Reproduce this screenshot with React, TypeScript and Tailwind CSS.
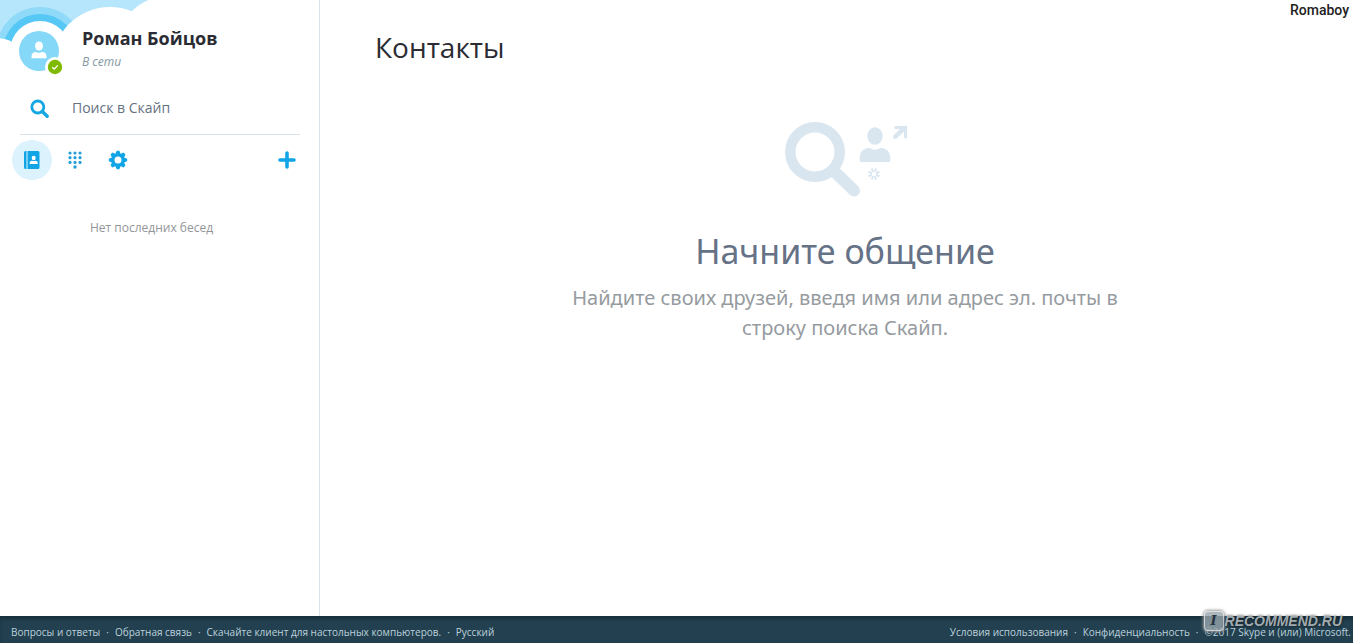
import React from "react";

function SkyBackdrop() {
  return (
    <svg
      className="pointer-events-none absolute top-0 left-0"
      width="160"
      height="80"
      viewBox="0 0 160 80"
      aria-hidden="true"
    >
      <path d="M0 0H160V80H0Z" fill="#b5e6fb" />
      <circle cx="40" cy="51" r="44" fill="#8fdaf8" />
      <circle cx="40" cy="51" r="37" fill="#55c8f5" />
      <g fill="#fff">
        <circle cx="40" cy="51" r="30" />
        <circle cx="-3" cy="69" r="31" />
        <circle cx="110" cy="65" r="58" />
        <circle cx="170" cy="50" r="54.500" />
        <path d="M0 60H160V80H0Z" />
      </g>
    </svg>
  );
}

function Avatar() {
  return (
    <svg width="44" height="44" viewBox="0 0 44 44" role="img" aria-label="В сети">
      <circle cx="20" cy="20" r="20" fill="#85d8f7" />
      <ellipse cx="20" cy="15" rx="4" ry="4.6" fill="#fff" />
      <path d="M12.5 27.3v-1.8c0-3 1.8-4.6 4.3-4.6.9 0 1.7.9 3.2.9s2.300-.9 3.200-.9c2.500 0 4.300 1.600 4.300 4.600v1.800z" fill="#fff" />
      <circle cx="36" cy="36" r="10" fill="#fff" />
      <circle cx="36" cy="36" r="7.200" fill="#7fba00" />
      <path d="M33.200 36.200l2 1.800 3.700-3.600" fill="none" stroke="#fff" strokeWidth="1.300" />
    </svg>
  );
}

function SearchIcon() {
  return (
    <svg width="20" height="20" viewBox="0 0 20 20" fill="none" stroke="#14a7e4" aria-hidden="true">
      <circle cx="7.800" cy="8" r="6" strokeWidth="2.800" />
      <path d="M12.300 12.500l4.900 4.700" strokeWidth="3.400" strokeLinecap="round" />
    </svg>
  );
}

function ContactsIcon() {
  return (
    <svg width="16" height="18" viewBox="0 0 16 18" aria-hidden="true">
      <path d="M1.500 0H2.500V18H1.500A1.500 1.500 0 0 1 0 16.500V1.500A1.500 1.500 0 0 1 1.500 0Z" fill="#12a5e6" />
      <path d="M3.500 0H14A1.500 1.500 0 0 1 15.500 1.500V16.500A1.500 1.500 0 0 1 14 18H3.500Z" fill="#12a5e6" />
      <ellipse cx="9.700" cy="7" rx="2" ry="2.300" fill="#fff" />
      <path d="M5.700 12.900v-.9c0-1.500 1-2.300 2.300-2.300.5 0 .9.400 1.700.4s1.200-.4 1.700-.4c1.300 0 2.300.8 2.300 2.300v.9z" fill="#fff" />
    </svg>
  );
}

function DialpadIcon() {
  const dots = [0, 1, 2].flatMap((row) => [0, 1, 2].map((col) => [2 + col * 5, 2 + row * 4.700]));
  return (
    <svg width="14" height="18" viewBox="0 0 14 18" fill="#249fda" aria-hidden="true">
      {dots.map(([x, y]) => (
        <circle key={`${x}-${y}`} cx={x} cy={y} r="1.600" />
      ))}
      <circle cx="7" cy="16" r="1.700" />
    </svg>
  );
}

function GearIcon() {
  return (
    <svg width="20" height="20" viewBox="0 0 20 20" aria-hidden="true">
      <g fill="#12a5e6">
        {[0, 45, 90, 135].map((a) => (
          <path key={a} d="M7.900 2.600L8.700 .8H11.300L12.100 2.600V17.400L11.300 19.200H8.700L7.900 17.400Z" transform={`rotate(${a} 10 10)`} />
        ))}
        <circle cx="10" cy="10" r="7" />
      </g>
      <circle cx="10" cy="10" r="3.500" fill="#fff" />
    </svg>
  );
}

function PlusIcon() {
  return (
    <svg width="18" height="18" viewBox="0 0 18 18" stroke="#12a5e6" strokeWidth="3.600" strokeLinecap="round" aria-hidden="true">
      <path d="M9 2V16M2 9H16" />
    </svg>
  );
}

function SearchIllustration() {
  return (
    <svg className="ml-1" width="124" height="78" viewBox="0 0 124 78" aria-hidden="true">
      <g fill="none" stroke="#d9e6f0">
        <circle cx="30" cy="31" r="24.700" strokeWidth="10.500" />
        <path d="M49 50L69 69.500" strokeWidth="12" strokeLinecap="round" />
        <path d="M110.300 15.700L119 7.500" strokeWidth="4.600" strokeLinecap="round" />
        <path d="M109.500 6.400H120.600V17.200" strokeWidth="3" />
      </g>
      <g fill="#d9e6f0">
        <ellipse cx="90" cy="15" rx="7.700" ry="8.800" />
        <path d="M74.700 40V37C74.700 31.300 78.600 27 84 27C86.300 27 87 28.800 90 28.800S93.800 27 96.100 27C101.400 27 105.300 31.300 105.300 37V40Q105.300 41 104.300 41H75.700Q74.700 41 74.700 40Z" />
      </g>
      <g stroke="#d9e6f0" strokeWidth="2" strokeLinecap="round">
        {[22.5, 67.5, 112.5, 157.5, 202.5, 247.5, 292.5, 337.5].map((a) => (
          <path key={a} d="M89 50V47.900" transform={`rotate(${a} 89 53)`} />
        ))}
      </g>
    </svg>
  );
}

function Sidebar() {
  return (
    <aside className="relative flex w-80 shrink-0 flex-col border-r border-[#d9e4ea]">
      <SkyBackdrop />
      <div className="relative flex items-start pt-[31px] pl-[19px]">
        <Avatar />
        <div className="-mt-[5px] pl-[19px]">
          <h2 className="text-[18px] leading-6 font-bold text-[#2b2c33]">Роман Бойцов</h2>
          <p className="text-[12px] leading-6 text-[#8396a2] italic">В сети</p>
        </div>
      </div>
      <label className="mt-4 mr-[19px] ml-5 flex h-11 items-center border-b border-[#dce3e8] pb-2 pl-[10px]">
        <SearchIcon />
        <input
          type="text"
          aria-label="Поиск в Скайп"
          placeholder="Поиск в Скайп"
          className="ml-[22px] min-w-0 flex-1 bg-transparent pb-[2px] text-[14px] leading-5 outline-none placeholder:text-[#66727f]"
        />
      </label>
      <nav className="mt-[5px] flex items-center pr-[23px] pl-3">
        <button type="button" aria-label="Контакты" className="flex size-10 items-center justify-center rounded-full bg-[#dcf3fd]">
          <ContactsIcon />
        </button>
        <button type="button" aria-label="Набор номера" className="ml-[3px] flex size-10 items-center justify-center">
          <DialpadIcon />
        </button>
        <button type="button" aria-label="Настройки" className="ml-[3px] flex size-10 items-center justify-center">
          <GearIcon />
        </button>
        <button type="button" aria-label="Добавить" className="ml-auto">
          <PlusIcon />
        </button>
      </nav>
      <p className="mt-[38px] pr-4 text-center text-[12px] leading-5 text-[#929699]">Нет последних бесед</p>
    </aside>
  );
}

function Dot() {
  return <span aria-hidden="true">·</span>;
}

function Footer() {
  return (
    <footer className="relative flex h-[27px] shrink-0 items-center justify-between bg-[#22404f] pt-[5px] pr-[2px] pl-[11px] text-[10px] leading-4 whitespace-nowrap text-[#bdd2de] shadow-[inset_0_3px_3px_#1a303c]">
      <div className="flex gap-[6px]">
        <a href="#faq">Вопросы и ответы</a>
        <Dot />
        <a href="#feedback">Обратная связь</a>
        <Dot />
        <a href="#download">Скачайте клиент для настольных компьютеров.</a>
        <Dot />
        <a href="#language">Русский</a>
      </div>
      <div className="flex gap-[6px]">
        <a href="#terms">Условия использования</a>
        <Dot />
        <a href="#privacy">Конфиденциальность</a>
        <Dot />
        <span>©2017 Skype и (или) Microsoft.</span>
      </div>
      <div className="absolute right-[11px] bottom-3 flex items-center gap-px font-['Liberation_Sans',sans-serif] font-bold italic">
        <span className="flex size-5 items-center justify-center rounded-[4px] border border-white/60 bg-[#9aa5ab]/80 font-['DejaVu_Serif',serif] text-[13px] text-[#24343e] shadow-[0_0_3px_1px_#9a9a9a]">
          I
        </span>
        <span className="text-[14px] text-[#a0abb1] [text-shadow:0_0_3px_#111]">RECOMMEND.RU</span>
      </div>
    </footer>
  );
}

export default function App() {
  return (
    <div className="flex min-h-screen flex-col bg-white font-['Open_Sans','Noto_Sans',sans-serif]">
      <div className="flex flex-1">
        <Sidebar />
        <main className="relative flex flex-1 flex-col pr-[38px] pl-[55px]">
          <span className="absolute top-0 right-[4px] font-[Roboto,sans-serif] text-[14px] leading-5 font-medium text-[#222]">
            Romaboy
          </span>
          <h1 className="pt-[27px] text-[28px] leading-10 text-[#2b2c33]">Контакты</h1>
          <section className="mt-[54px] flex flex-col items-center text-center">
            <SearchIllustration />
            <h2 className="mt-7 font-['Noto_Sans',sans-serif] text-[34px] leading-[48px] text-[#667286]">Начните общение</h2>
            <p className="mt-2 max-w-[560px] font-['Noto_Sans',sans-serif] text-[20px] leading-[30px] text-[#969b9f]">
              Найдите своих друзей, введя имя или адрес эл. почты в строку поиска Скайп.
            </p>
          </section>
        </main>
      </div>
      <Footer />
    </div>
  );
}
